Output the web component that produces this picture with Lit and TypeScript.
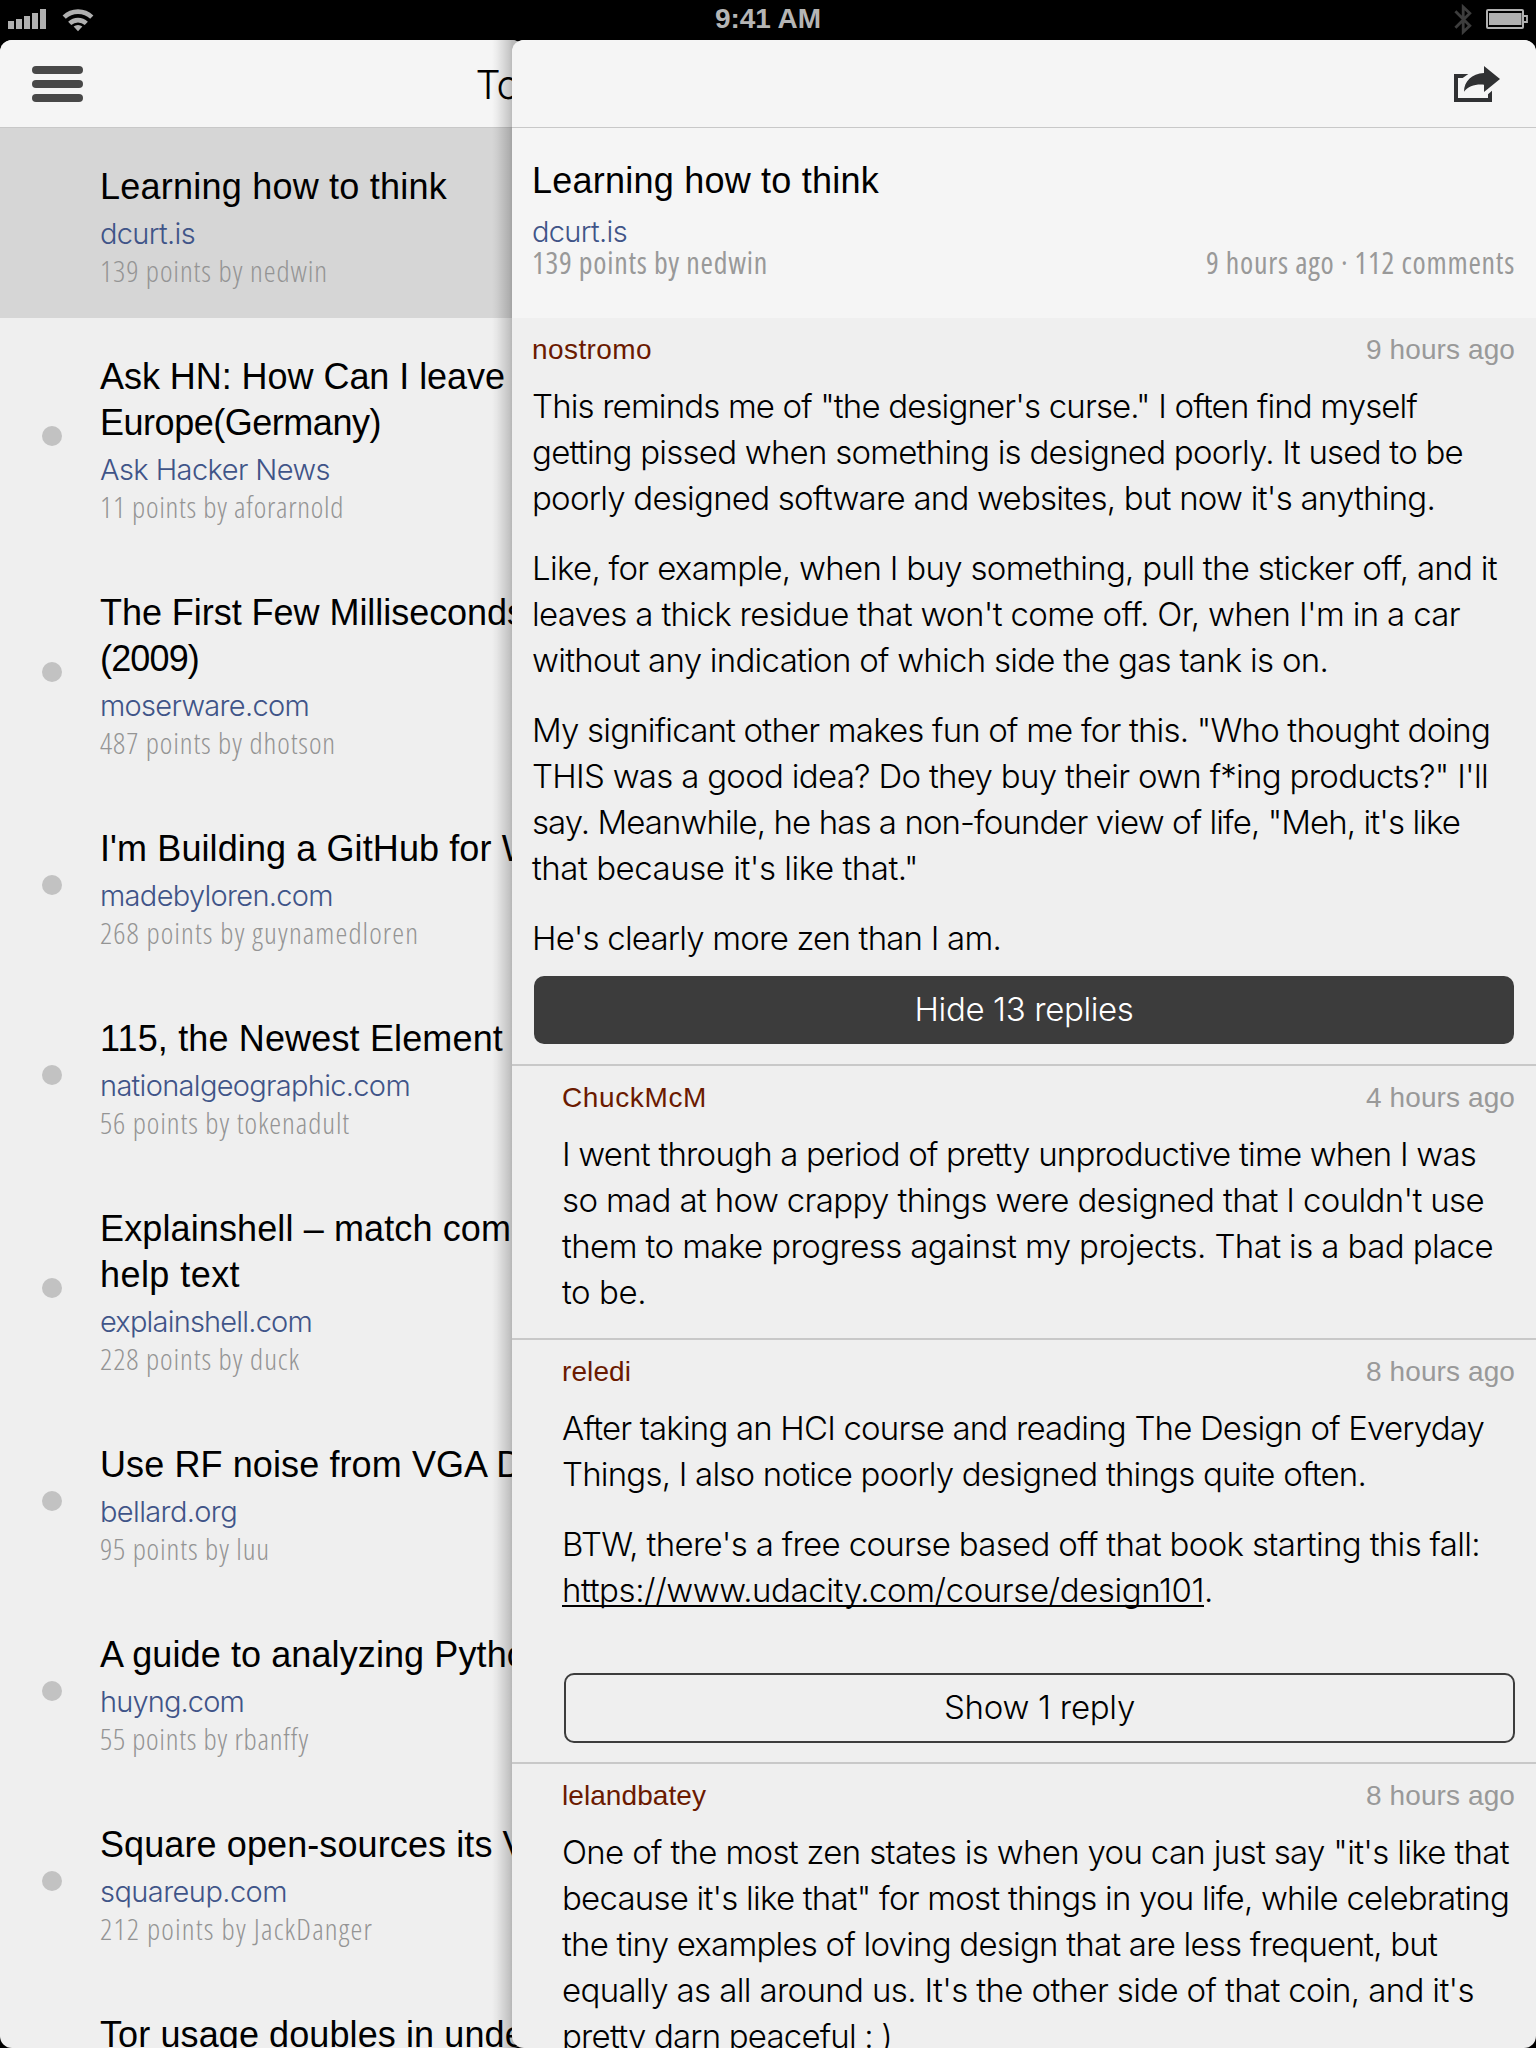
import { LitElement, html, css, svg, nothing } from "lit";
import { customElement, property } from "lit/decorators.js";

/** A line of text and the advance width, in pixels, it is tracked to. */
type Line = { text: string; width?: number; link?: boolean; tail?: string };

interface Story {
  title: Line[];
  site?: Line;
  meta?: Line;
  read?: boolean;
}

interface Comment {
  author: Line;
  age: string;
  paragraphs: Line[][];
  button?: Line;
  open?: boolean;
  child?: boolean;
}

const l = (text: string, width?: number): Line => ({ text, width });

const STORIES: Story[] = [
  { title: [l("Learning how to think", 347)], site: l("dcurt.is", 95), meta: l("139 points by nedwin", 228), read: true },
  {
    title: [l("Ask HN: How Can I leave", 405), l("Europe(Germany)", 281)],
    site: l("Ask Hacker News", 230),
    meta: l("11 points by aforarnold", 244),
  },
  { title: [l("The First Few Milliseconds", 425), l("(2009)", 99)], site: l("moserware.com", 209), meta: l("487 points by dhotson", 236) },
  { title: [l("I'm Building a GitHub for W")], site: l("madebyloren.com", 233), meta: l("268 points by guynamedloren", 319) },
  { title: [l("115, the Newest Element", 403)], site: l("nationalgeographic.com", 310), meta: l("56 points by tokenadult", 250) },
  {
    title: [l("Explainshell – match com", 411), l("help text", 140)],
    site: l("explainshell.com", 212),
    meta: l("228 points by duck", 200),
  },
  { title: [l("Use RF noise from VGA D")], site: l("bellard.org", 137), meta: l("95 points by luu", 170) },
  { title: [l("A guide to analyzing Pytho")], site: l("huyng.com", 144), meta: l("55 points by rbanffy", 209) },
  { title: [l("Square open-sources its V")], site: l("squareup.com", 187), meta: l("212 points by JackDanger", 273) },
  { title: [l("Tor usage doubles in unde")] },
];

const COMMENTS: Comment[] = [
  {
    author: l("nostromo", 120),
    age: "9 hours ago",
    paragraphs: [
      [
        l('This reminds me of "the designer\'s curse." I often find myself', 885),
        l("getting pissed when something is designed poorly. It used to be", 931),
        l("poorly designed software and websites, but now it's anything.", 903),
      ],
      [
        l("Like, for example, when I buy something, pull the sticker off, and it", 965),
        l("leaves a thick residue that won't come off. Or, when I'm in a car", 928),
        l("without any indication of which side the gas tank is on.", 796),
      ],
      [
        l('My significant other makes fun of me for this. "Who thought doing', 958),
        l("THIS was a good idea? Do they buy their own f*ing products?\" I'll", 956),
        l('say. Meanwhile, he has a non-founder view of life, "Meh, it\'s like', 928),
        l('that because it\'s like that."', 386),
      ],
      [l("He's clearly more zen than I am.", 469)],
    ],
    button: l("Hide 13 replies", 219),
    open: true,
  },
  {
    author: l("ChuckMcM", 145),
    age: "4 hours ago",
    child: true,
    paragraphs: [
      [
        l("I went through a period of pretty unproductive time when I was", 914),
        l("so mad at how crappy things were designed that I couldn't use", 922),
        l("them to make progress against my projects. That is a bad place", 931),
        l("to be.", 84),
      ],
    ],
  },
  {
    author: l("reledi", 69),
    age: "8 hours ago",
    child: true,
    paragraphs: [
      [
        l("After taking an HCI course and reading The Design of Everyday", 922),
        l("Things, I also notice poorly designed things quite often.", 804),
      ],
      [
        l("BTW, there's a free course based off that book starting this fall:", 918),
        { text: "https://www.udacity.com/course/design101", width: 642, link: true, tail: "." },
      ],
    ],
    button: l("Show 1 reply", 191),
  },
  {
    author: l("lelandbatey", 144),
    age: "8 hours ago",
    child: true,
    paragraphs: [
      [
        l('One of the most zen states is when you can just say "it\'s like that', 947),
        l('because it\'s like that" for most things in you life, while celebrating', 947),
        l("the tiny examples of loving design that are less frequent, but", 875),
        l("equally as all around us. It's the other side of that coin, and it's", 912),
        l("pretty darn peaceful : )", 330),
      ],
    ],
  },
];

@customElement("tracked-text")
class TrackedText extends LitElement {
  @property() text = "";
  @property({ type: Number }) width = 0;

  static styles = css`
    :host { display: inline-block; white-space: nowrap; }
  `;

  render() {
    return html`<span>${this.text}</span>`;
  }

  updated() {
    if (!this.width) return;
    const span = this.renderRoot.querySelector("span")!;
    span.style.letterSpacing = "0";
    const natural = span.getBoundingClientRect().width;
    span.style.letterSpacing = `${(this.width - natural) / this.text.length}px`;
  }
}

const tracked = (t: Line) => html`<tracked-text .text=${t.text} .width=${t.width ?? 0}></tracked-text>`;

@customElement("status-bar")
class StatusBar extends LitElement {
  static styles = css`
    :host {
      display: grid;
      grid-template-columns: 1fr auto 1fr;
      height: 40px;
      background: #000;
      color: #b5b5b5;
      font: bold 28px/38px "Liberation Sans", Arial, sans-serif;
    }
    svg { display: block; }
    .time { height: 40px; }
    .right { justify-self: end; }
  `;

  render() {
    return html`
      <svg width="110" height="40" fill="#b0b0b0">
        ${[[8, 21], [16, 19], [24, 16], [32, 13], [40, 9]].map(
          ([x, y]) => svg`<rect x=${x} y=${y} width="6" height=${29 - y}></rect>`,
        )}
        <g fill="none" stroke="#b0b0b0">
          <path stroke-width="4.6" d="M64.2 17.2A19.8 19.8 0 0 1 91.8 17.2"></path>
          <path stroke-width="4.6" d="M69.7 23.4A12.2 12.2 0 0 1 86.3 23.4"></path>
        </g>
        <path d="M73.6 26.6A6.6 6.6 0 0 1 82.4 26.6L78 31.2Z"></path>
      </svg>
      <div class="time"><tracked-text .text=${"9:41 AM"} .width=${106}></tracked-text></div>
      <svg class="right" width="110" height="40" viewBox="1426 0 110 40">
        <path fill="none" stroke="#3d3d3d" stroke-width="2.8" d="M1455.4 11.2L1469.8 25.8L1463.2 32V7L1469.8 13.2L1455.4 27.8"></path>
        <g fill="none" stroke="#b0b0b0" stroke-width="2">
          <rect x="1487" y="10" width="36" height="18" rx="1"></rect>
          <path d="M1524 16H1527V22H1524" stroke-width="1.8"></path>
        </g>
        <rect x="1489" y="13" width="32.5" height="12" fill="#b0b0b0"></rect>
      </svg>
    `;
  }
}

@customElement("story-list")
class StoryList extends LitElement {
  static styles = css`
    :host {
      display: block;
      overflow: hidden;
      border-radius: 12px;
      background: #efefef;
      font-family: "Liberation Sans", Arial, sans-serif;
    }
    .nav {
      display: flex;
      box-sizing: border-box;
      width: 1024px;
      height: 88px;
      padding: 0 32px;
      align-items: center;
      background: #f5f5f5;
      border-bottom: 1px solid #c8c8c8;
    }
    .nav svg { display: block; flex: none; }
    .nav h1 {
      flex: 1;
      margin: 0 58px 0 0;
      padding-top: 2px;
      text-align: center;
      font: 300 39.5px/46px Inter, sans-serif;
      letter-spacing: -1px;
    }
    .story {
      display: grid;
      grid-template-columns: 100px 1fr;
      align-items: center;
      min-height: 190px;
    }
    .selected { background: #d6d6d6; }
    .dot {
      width: 20px;
      height: 20px;
      margin-left: 42px;
      border-radius: 50%;
      background: #c2c2c2;
    }
    .text { grid-column: 2; align-self: start; padding: 36px 0 29px; white-space: nowrap; }
    .title { font-size: 36px; line-height: 46px; letter-spacing: 0.1px; }
    .site {
      margin-top: 7px;
      font: 300 29px/33px Inter, sans-serif;
      color: #3f5488;
    }
    .meta {
      margin-top: 3px;
      font: 340 30px/36px "Open Sans", sans-serif;
      font-stretch: 80%;
      color: #949494;
    }
  `;

  render() {
    return html`
      <div class="nav">
        <svg width="51" height="36" fill="#484848">
          <rect width="51" height="8" rx="4"></rect>
          <rect y="14" width="51" height="8" rx="4"></rect>
          <rect y="28" width="51" height="8" rx="4"></rect>
        </svg>
        <h1>Top</h1>
      </div>
      ${STORIES.map(
        (s) => html`
          <div class="story ${s.read ? "selected" : ""}">
            ${s.read || !s.site ? nothing : html`<div class="dot"></div>`}
            <div class="text">
              ${s.title.map((t) => html`<div class="title">${tracked(t)}</div>`)}
              ${s.site ? html`<div class="site">${tracked(s.site)}</div>` : nothing}
              ${s.meta ? html`<div class="meta">${tracked(s.meta)}</div>` : nothing}
            </div>
          </div>
        `,
      )}
    `;
  }
}

@customElement("comment-item")
class CommentItem extends LitElement {
  @property({ attribute: false }) comment!: Comment;

  static styles = css`
    :host { display: block; font-family: "Liberation Sans", Arial, sans-serif; }
    .comment { padding: 15px 21px 23px 20px; }
    .child { padding-left: 50px; border-top: 2px solid #c8c8c8; }
    .open { padding-bottom: 20px; }
    .closed { padding-bottom: 19px; }
    .head { display: flex; justify-content: space-between; font-size: 28px; line-height: 34px; }
    .author { color: #6b1a00; }
    .age { color: #999; }
    .body { margin-top: 16px; font: 300 33px/46px Inter, sans-serif; white-space: nowrap; }
    p { margin: 0; }
    p + p { margin-top: 24px; }
    .line { height: 46px; }
    .link { display: inline-block; height: 38px; border-bottom: 2px solid #000; }
    .button {
      display: flex;
      box-sizing: border-box;
      justify-content: center;
      margin-left: 2px;
      border-radius: 10px;
      font: 300 33px/46px Inter, sans-serif;
    }
    .open .button {
      height: 68px;
      margin-top: 15px;
      margin-right: 1px;
      padding-top: 10px;
      background: #3c3c3c;
      color: #fff;
    }
    .closed .button {
      height: 70px;
      margin-top: 60px;
      padding-top: 9px;
      border: 2px solid #3c3c3c;
    }
  `;

  render() {
    const c = this.comment;
    const state = c.button ? (c.open ? "open" : "closed") : "";
    return html`
      <div class="comment ${c.child ? "child" : ""} ${state}">
        <div class="head">
          <span class="author">${tracked(c.author)}</span>
          <span class="age">${tracked(l(c.age, 149))}</span>
        </div>
        <div class="body">
          ${c.paragraphs.map(
            (p) => html`<p>${p.map(
              (t) => html`<div class="line">${t.link
                ? html`<span class="link">${tracked(t)}</span>${t.tail}`
                : tracked(t)}</div>`,
            )}</p>`,
          )}
        </div>
        ${c.button ? html`<div class="button">${tracked(c.button)}</div>` : nothing}
      </div>
    `;
  }
}

@customElement("story-detail")
class StoryDetail extends LitElement {
  static styles = css`
    :host { display: block; position: relative; z-index: 1; }
    .shadow {
      position: absolute;
      z-index: -1;
      top: 0;
      bottom: 0;
      left: -20px;
      width: 34px;
      background: linear-gradient(
        to right,
        rgba(0, 0, 0, 0) 0,
        rgba(0, 0, 0, 0.04) 5px,
        rgba(0, 0, 0, 0.11) 11px,
        rgba(0, 0, 0, 0.18) 17px,
        rgba(0, 0, 0, 0.24) 20px
      );
    }
    .panel { height: 100%; overflow: hidden; border-radius: 12px; background: #efefef; }
    .nav {
      display: flex;
      box-sizing: border-box;
      height: 88px;
      padding: 0 36px 0 0;
      align-items: center;
      justify-content: flex-end;
      background: #f5f5f5;
      border-bottom: 1px solid #c8c8c8;
    }
    .story {
      box-sizing: border-box;
      height: 190px;
      padding: 30px 21px 0 20px;
      background: #f5f5f5;
      font-family: "Liberation Sans", Arial, sans-serif;
    }
    .title { font-size: 36px; line-height: 46px; }
    .site { margin-top: 11px; font: 300 29px/33px Inter, sans-serif; color: #3f5488; }
    .meta {
      display: flex;
      justify-content: space-between;
      margin-top: 1px;
      font: 400 30px/28px "Open Sans", sans-serif;
      font-stretch: 80%;
      color: #999;
    }
  `;

  render() {
    return html`
      <div class="shadow"></div>
      <div class="panel">
        <div class="nav">
          <svg width="46" height="36" viewBox="222 198 138 108" fill="#303133">
            <path d="M222 222H265L248 234H234V294H324V283L336 272V306H222Z"></path>
            <path d="M312 198L360 237L312 276V254C285 252 265 258 252 275C252 244 275 221 312 219Z"></path>
          </svg>
        </div>
        <div class="story">
          <div class="title">${tracked(l("Learning how to think", 347))}</div>
          <div class="site">${tracked(l("dcurt.is", 95))}</div>
          <div class="meta">
            ${tracked(l("139 points by nedwin", 236))} ${tracked(l("9 hours ago · 112 comments", 309))}
          </div>
        </div>
        ${COMMENTS.map((c) => html`<comment-item .comment=${c}></comment-item>`)}
      </div>
    `;
  }
}

@customElement("app-root")
class AppRoot extends LitElement {
  static styles = css`
    :host { display: block; width: 1536px; height: 2048px; overflow: hidden; background: #000; color: #000; }
    .split { display: flex; height: 2008px; }
    story-list { flex: 0 0 524px; }
    story-detail { flex: 0 0 1024px; margin-left: -12px; }
  `;

  render() {
    return html`
      <status-bar></status-bar>
      <div class="split">
        <story-list></story-list>
        <story-detail></story-detail>
      </div>
    `;
  }
}
